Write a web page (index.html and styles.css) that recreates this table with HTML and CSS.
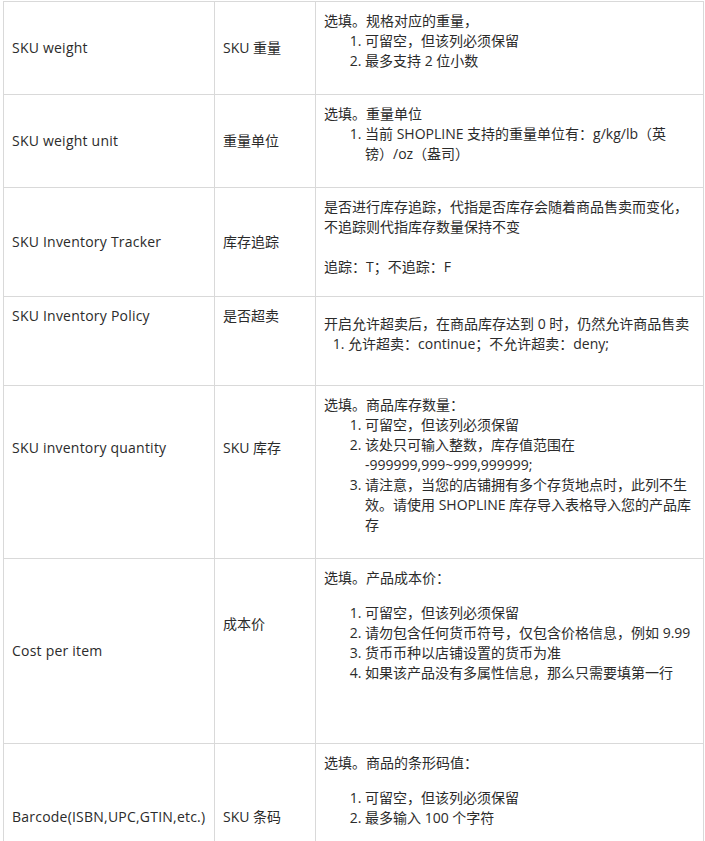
FILE: index.html
```html
<!DOCTYPE html>
<html lang="zh-CN">
<head>
<meta charset="utf-8">
<link rel="stylesheet" href="styles.css">
</head>
<body>
<div class="wrap">
<table class="spec">
  <colgroup>
    <col class="c1"><col class="c2"><col class="c3">
  </colgroup>
  <tr class="r1">
    <td class="name en">SKU weight</td>
    <td class="name">SKU 重量</td>
    <td class="desc">
      <p>选填。规格对应的重量，</p>
      <ol>
        <li>可留空，但该列必须保留</li>
        <li>最多支持 2 位小数</li>
      </ol>
    </td>
  </tr>
  <tr class="r2">
    <td class="name en">SKU weight unit</td>
    <td class="name">重量单位</td>
    <td class="desc">
      <p>选填。重量单位</p>
      <ol>
        <li>当前 SHOPLINE 支持的重量单位有：g/kg/lb（英镑）/oz（盎司）</li>
      </ol>
    </td>
  </tr>
  <tr class="r3">
    <td class="name en">SKU Inventory Tracker</td>
    <td class="name">库存追踪</td>
    <td class="desc">
      <p>是否进行库存追踪，代指是否库存会随着商品售卖而变化，不追踪则代指库存数量保持不变</p>
      <p class="gap">追踪：T；不追踪：F</p>
    </td>
  </tr>
  <tr class="r4">
    <td class="name en top">SKU Inventory Policy</td>
    <td class="name top">是否超卖</td>
    <td class="desc lower">
      <p>开启允许超卖后，在商品库存达到 0 时，仍然允许商品售卖</p>
      <ol class="narrow">
        <li>允许超卖：continue；不允许超卖：deny;</li>
      </ol>
    </td>
  </tr>
  <tr class="r5">
    <td class="name en top high">SKU inventory quantity</td>
    <td class="name top high">SKU 库存</td>
    <td class="desc">
      <p>选填。商品库存数量：</p>
      <ol>
        <li>可留空，但该列必须保留</li>
        <li>该处只可输入整数，库存值范围在 -999999,999~999,999999;</li>
        <li>请注意，当您的店铺拥有多个存货地点时，此列不生效。请使用 SHOPLINE 库存导入表格导入您的产品库存</li>
      </ol>
    </td>
  </tr>
  <tr class="r6">
    <td class="name en">Cost per item</td>
    <td class="name top offset">成本价</td>
    <td class="desc">
      <p>选填。产品成本价：</p>
      <ol class="spaced">
        <li>可留空，但该列必须保留</li>
        <li>请勿包含任何货币符号，仅包含价格信息，例如 9.99</li>
        <li>货币币种以店铺设置的货币为准</li>
        <li>如果该产品没有多属性信息，那么只需要填第一行</li>
      </ol>
    </td>
  </tr>
  <tr class="r7">
    <td class="name en">Barcode(ISBN,UPC,GTIN,etc.)</td>
    <td class="name">SKU 条码</td>
    <td class="desc">
      <p>选填。商品的条形码值：</p>
      <ol class="spaced">
        <li>可留空，但该列必须保留</li>
        <li>最多输入 100 个字符</li>
      </ol>
    </td>
  </tr>
</table>
</div>
</body>
</html>
```
FILE: styles.css
```css
html, body {
  margin: 0;
  padding: 0;
  background: #ffffff;
}

.wrap {
  padding: 1px 0 0 3px;
}

.spec {
  border-collapse: collapse;
  table-layout: fixed;
  width: 700px;
  font-family: "Open Sans", "Noto Sans CJK SC", sans-serif;
  font-size: 14px;
  line-height: 20px;
  color: #2b2b2b;
}

.c1 { width: 211px; }
.c2 { width: 101px; }
.c3 { width: 388px; }

.spec td {
  border: 1px solid #d9d9d9;
  padding: 9px 8px;
  vertical-align: middle;
}

.spec td.en {
  letter-spacing: 0.22px;
}

.spec td.desc {
  vertical-align: top;
}

.spec td.top {
  vertical-align: top;
}

.spec td.high {
  padding-top: 52px;
}

.spec td.offset {
  padding-top: 55px;
}

.spec td.lower {
  padding-top: 17px;
}

.spec p {
  margin: 0;
}

.spec p.gap {
  margin-top: 20px;
}

.spec ol {
  margin: 0;
  padding-left: 41px;
}

.spec ol.narrow {
  padding-left: 24px;
}

.spec ol.spaced {
  margin-top: 15px;
}

.r1 { height: 93px; }
.r2 { height: 93px; }
.r3 { height: 109px; }
.r4 { height: 89px; }
.r5 { height: 173px; }
.r6 { height: 185px; }
.r7 { height: 146px; }
```
